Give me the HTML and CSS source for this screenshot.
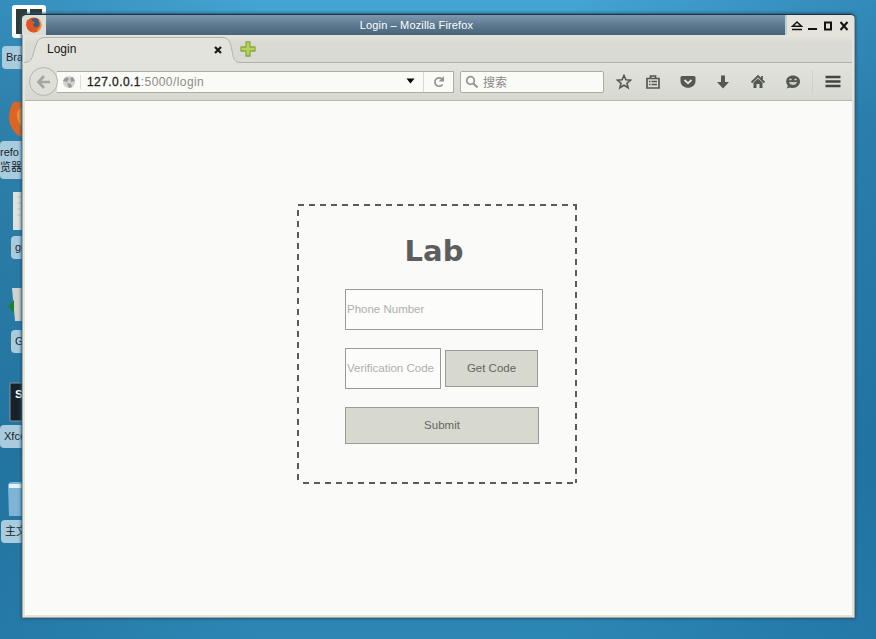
FILE: index.html
```html
<!DOCTYPE html>
<html lang="en">
<head>
<meta charset="utf-8">
<title>Login</title>
<link rel="stylesheet" href="styles.css">
</head>
<body>
<div class="desktop">
  <svg class="shortcuts" width="48" height="639" viewBox="0 0 48 639">
    <rect x="12" y="5" width="34" height="33" rx="3" fill="#fff"/>
    <path d="M16 9h11v25H16zM30 9h12v25H30z" fill="#303b35"/>
    <path d="M24 101c-6 0-8 3-10 0-5 8-7 20-2 27 4 7 8 9 12 9z" fill="#db6624"/>
    <path d="M24 108c-5 0-8 3-7 8 0 5 3 9 7 12z" fill="#f08b36"/>
    <path d="M13 192h11v38H13z" fill="#dfe1dc"/><path d="M17 197h7M17 203h7M17 209h7M17 215h7" stroke="#c3c6c0"/>
    <path d="M12 288h12v33H15z" fill="#cfd2cd"/><path d="M8 306l6-6v13z" fill="#168431"/>
    <path d="M10 383h14v38H10z" fill="#172126" stroke="#82979f"/>
    <path d="M8 486q0-4 4-4h12v34H9z" fill="#7eb5d6"/><path d="M9 484h15v4H9z" fill="#e8f2f6"/>
  </svg>
  <span class="label l1">Brave</span>
  <span class="label l2">refo<br>览器</span>
  <span class="label l3">gedit</span>
  <span class="label l4">GVim</span>
  <span class="label l5">Xfce</span>
  <span class="label l6">主文</span>
  <span class="terminal">S</span>

  <div class="window">
    <header class="titlebar">
      <div class="appicon">
        <svg width="18" height="18" viewBox="0 0 18 18"><circle cx="9" cy="9" r="7.5" fill="#cf4820"/><circle cx="10" cy="7.5" r="5" fill="#395f83"/><path d="M2 4c2 0 3-2 4-2l1 3 3 1-2 3c1 3 5 3 7-1 0 6-4 9-8 8C2 15 0 9 2 4z" fill="#df5626"/><path d="M14 4c3 4 2 9-2 11" fill="none" stroke="#ee9835" stroke-width="1.5"/></svg>
      </div>
      <div class="title"><span>Login – Mozilla Firefox</span></div>
      <div class="controls">
        <svg width="68" height="20" viewBox="0 0 68 20" fill="none" stroke="#11140f" stroke-width="2"><path d="M7.500 11.200L12 7l4.500 4.200z" stroke-width="1.5"/><path d="M7 14.500h10" stroke-width="1.5"/><path d="M23 14h9"/><path d="M40 7.500h6v7h-6z"/><path d="M55.500 7l7 8M62.500 7l-7 8"/></svg>
      </div>
    </header>
    <div class="tabs">
      <svg class="tabshape" width="216" height="27" viewBox="0 0 216 27"><path d="M0 26.500c7 0 8-4 10-11C13 5 14 2 20 1.500h178c7 0 8 4 10 13 1 8 3 12 8 12V27H0z" fill="#e2e3dc"/><path d="M0 26.500c7 0 8-4 10-11C13 5 14 2 20 1.500h178c7 0 8 4 10 13 1 8 3 12 8 12" fill="none" stroke="#b2b3aa"/></svg>
      <span class="tabname">Login</span>
      <svg class="close" width="10" height="10" viewBox="0 0 10 10"><path d="M2 2l6 6M8 2L2 8" stroke="#171a17" stroke-width="2.200"/></svg>
      <svg class="plus" width="18" height="18" viewBox="0 0 18 18"><path d="M7 2h4v5h5v4h-5v5H7v-5H2V7h5z" fill="#b9d45a" stroke="#88a83c" stroke-width="1.300" stroke-linejoin="round"/></svg>
    </div>
    <nav class="toolbar">
      <div class="back"><svg width="16" height="16" viewBox="0 0 16 16"><path d="M8 2L2.500 8 8 14M3 8h11" fill="none" stroke="#a4a69f" stroke-width="2.700"/></svg></div>
      <div class="address">
        <svg class="globe" width="14" height="14" viewBox="0 0 14 14"><circle cx="7" cy="7" r="6" fill="#d2d3ce"/><path d="M2 4l3-2 2 2-2 3-4-1zM8 3l3-1 2 4-4 1zM5 8l4 1 1 3-3 1z" fill="#989b96"/></svg>
        <span class="url"><b>127.0.0.1</b>:5000/login</span>
        <svg class="drop" width="9" height="6" viewBox="0 0 9 6"><path d="M.5.500h8l-4 5z" fill="#080808"/></svg>
        <div class="reload"><svg width="14" height="14" viewBox="0 0 14 14"><path d="M10.500 9.500A4.200 4.200 0 1 1 10 4" fill="none" stroke="#92958f" stroke-width="1.700"/><path d="M12 1v5.500H6.700z" fill="#92958f"/></svg></div>
      </div>
      <div class="search"><svg width="14" height="14" viewBox="0 0 14 14"><circle cx="5.500" cy="5.500" r="3.800" fill="none" stroke="#969892" stroke-width="1.800"/><path d="M8.500 8.500l4 4" stroke="#969892" stroke-width="2.200"/></svg><span>搜索</span></div>
      <div class="actions">
        <svg width="16" height="16" viewBox="0 0 16 16"><path d="M8 1.500l1.900 4.300 4.700.4-3.600 3 1.100 4.600L8 11.300l-4.100 2.500L5 9.200l-3.600-3 4.700-.4z" fill="none" stroke="#555852" stroke-width="1.600"/></svg>
        <svg width="16" height="16" viewBox="0 0 16 16"><path d="M2 4.500h12V14H2zM5.500 4.500V2h5v2.500" fill="none" stroke="#555852" stroke-width="1.700"/><path d="M4 7.500h1.500m1 0H12M4 10.500h1.500m1 0H12" stroke="#555852" stroke-width="1.500"/></svg>
        <svg width="16" height="16" viewBox="0 0 16 16"><path d="M2 2h12q1.500 0 1.500 1.500V7c0 9-15 9-15 0V3.500Q.5 2 2 2z" fill="#555852"/><path d="M4.500 6L8 9.200 11.500 6" fill="none" stroke="#e5e5df" stroke-width="1.800"/></svg>
        <svg width="16" height="16" viewBox="0 0 16 16"><path d="M6 1.500h4V8h4l-6 6.500L2 8h4z" fill="#555852"/></svg>
        <svg width="16" height="16" viewBox="0 0 16 16"><path d="M1.500 8.500L8 2l6.500 6.500M12 5V2" fill="none" stroke="#555852" stroke-width="1.800"/><path d="M3.500 8.500L8 4.500l4.500 4V14h-3v-4h-3v4h-3z" fill="#555852"/></svg>
        <svg width="16" height="16" viewBox="0 0 16 16"><path d="M8 1.500c4 0 7 2.500 7 6s-3 6.500-7 6.500c-1 0-2 0-3-.5l-3.500 1L3 12C-1 7 2 1.500 8 1.500z" fill="#555852"/><path d="M4 8h8c-.5 4-7.500 4-8 0z" fill="#c8cac3"/><path d="M4.500 5.500h2m3 0h2" stroke="#e1e2dc" stroke-width="1.500"/></svg>
      </div>
      <div class="menu"><svg width="16" height="14" viewBox="0 0 16 14"><path d="M.5 2h15M.5 6.500h15M.5 11h15" stroke="#444741" stroke-width="2.600"/></svg></div>
    </nav>
    <main class="page">
      <form class="login">
        <h1>Lab</h1>
        <input class="phone" placeholder="Phone Number" aria-label="Phone Number">
        <div class="code-row">
          <input class="code" placeholder="Verification Code" aria-label="Verification Code">
          <button class="get" type="button">Get Code</button>
        </div>
        <button class="submit" type="button">Submit</button>
      </form>
    </main>
  </div>
</div>
</body>
</html>
```
FILE: styles.css
```css
* { box-sizing: border-box; }
body { margin: 0; font-family: "Liberation Sans", "Noto Sans CJK SC", sans-serif; font-size: 11.5px; }
svg { display: block; flex: none; }
.desktop {
  position: relative; width: 876px; height: 639px; overflow: hidden;
  background: linear-gradient(90deg, rgba(28,105,150,.4), rgba(55,150,195,.1) 30%, rgba(55,150,195,.1) 65%, rgba(25,105,155,.45)), linear-gradient(#46a6d4, #398fb8 18%, #277ba6 70%, #2b85b2);
}
.shortcuts { position: absolute; left: 0; top: 0; }
.label { position: absolute; padding: 4px; border-radius: 4px; background: #a9cbde; color: #18232a; font-size: 11px; line-height: 15px; white-space: nowrap; }
.l1 { left: 2px; top: 46px; }
.l2 { left: 0; top: 141px; padding-left: 0; }
.l3 { left: 11px; top: 236px; }
.l4 { left: 11px; top: 330px; }
.l5 { left: 0; top: 425px; }
.l6 { left: 1px; top: 520px; }
.terminal { position: absolute; left: 15px; top: 388px; color: #fff; font-weight: bold; }
.window {
  position: absolute; left: 22px; top: 14px; width: 833px; height: 604px;
  display: flex; flex-direction: column; overflow: hidden; padding: 0 3px 3px;
  background: #e4e4dc; border-radius: 5px 5px 0 0;
  border-top: 1px solid #1c3347; box-shadow: inset -1px -1px #9ea49f, inset 1px 0 #9eaaae, 0 0 3px 1px #275572;
}
.titlebar { display: flex; height: 20px; flex: none; margin: 0 -2px 0 -3px; }
.appicon { width: 24px; padding: 1px 3px; background: #dddcd5; }
.title {
  flex: 1; display: flex; justify-content: center; color: #fff; font-size: 11px; line-height: 20px; padding-left: 2px;
  background: linear-gradient(#7f98ae, #607c94 45%, #486379); letter-spacing: .15px;
}
.controls { width: 69px; background: #e4e4dc; border-left: 2px solid #b9d0d9; }
.controls svg { margin-left: -2px; }
.tabs { display: flex; height: 28px; flex: none; align-items: flex-end; background: linear-gradient(#e5e4db, #d9dad3 30%); border-bottom: 1px solid #b0b2a8; }
.tabshape { margin: 0 0 -1px -1px; position: relative; }
.tabname { margin-left: -193px; width: 166px; line-height: 26px; position: relative; color: #161815; font-size: 12px; }
.close { margin-bottom: 7px; position: relative; }
.plus { margin: 0 0 4px 16px; }
.toolbar { height: 38px; flex: none; display: flex; align-items: center; background: linear-gradient(#e2e3dc, #d7d8d0); border-bottom: 1px solid #b5b6ac; padding-left: 4px; }
.back { width: 29px; height: 29px; border: 1px solid #b3b4ac; border-radius: 50%; background: #dedfd7; display: grid; place-items: center; position: relative; flex: none; }
.address { width: 397px; height: 22px; flex: none; display: flex; align-items: center; margin-left: -1px; padding-left: 5px; background: #fafaf7; border: 1px solid #acaea4; border-left: 0; }
.url { flex: 1; margin-left: 4px; padding-left: 6px; border-left: 1px solid #dcddd5; color: #8b8d87; font-size: 12px; white-space: nowrap; letter-spacing: .42px; }
.url b { color: #222420; font-weight: normal; -webkit-text-stroke: .3px #222420; }
.drop { margin-top: -2px; }
.reload { width: 30px; height: 20px; margin-left: 8px; border-left: 1px solid #d9dad2; display: grid; place-items: center; }
.search { width: 144px; height: 22px; flex: none; margin-left: 6px; padding-left: 4px; display: flex; align-items: center; gap: 4px; background: #fafaf7; border: 1px solid #acaea4; border-radius: 2px; color: #888a84; font-size: 12px; }
.actions { display: flex; margin-left: 12px; gap: 19px; }
.actions svg:first-child { margin-right: -6px; }
.menu { margin-left: 11px; padding-left: 12px; height: 24px; display: flex; align-items: center; border-left: 1px solid #d1d2ca; }
.page { flex: 1; background: #fafaf9; padding: 103px 0 0 272px; box-shadow: inset 1px 0 #fffef4, inset 0 -2px #fffef4; }
.login {
  width: 280px; height: 280px; padding: 29px 0 0 48px;
  --dash: #5a5b5c 0 6px, transparent 6px 11px;
  background:
    repeating-linear-gradient(90deg, var(--dash)) 1px 0 / 279px 2px no-repeat,
    repeating-linear-gradient(90deg, var(--dash)) 6px 100% / 273px 2px no-repeat,
    repeating-linear-gradient(var(--dash)) 0 6px / 2px 274px no-repeat,
    repeating-linear-gradient(var(--dash)) 100% 0 / 2px 279px no-repeat;
}
h1 { margin: 0 0 19px; width: 178px; text-align: center; font: bold 29px/37px "DejaVu Sans", sans-serif; color: #5d5e5e; }
input, button { display: block; margin: 0; border: 1px solid #999b99; border-radius: 0; font-family: "Liberation Sans", sans-serif; font-size: 11.5px; }
input { background: #fcfcfb; padding: 0 1px 2px; }
input::placeholder { color: #aeb0af; }
button { background: #d7d8ce; color: #646561; padding: 0 0 2px; }
.phone { width: 198px; height: 41px; }
.code-row { display: flex; align-items: center; gap: 4px; margin: 18px 0; }
.code { width: 96px; height: 41px; }
.get { width: 93px; height: 37px; }
.submit { width: 194px; height: 37px; }
```
